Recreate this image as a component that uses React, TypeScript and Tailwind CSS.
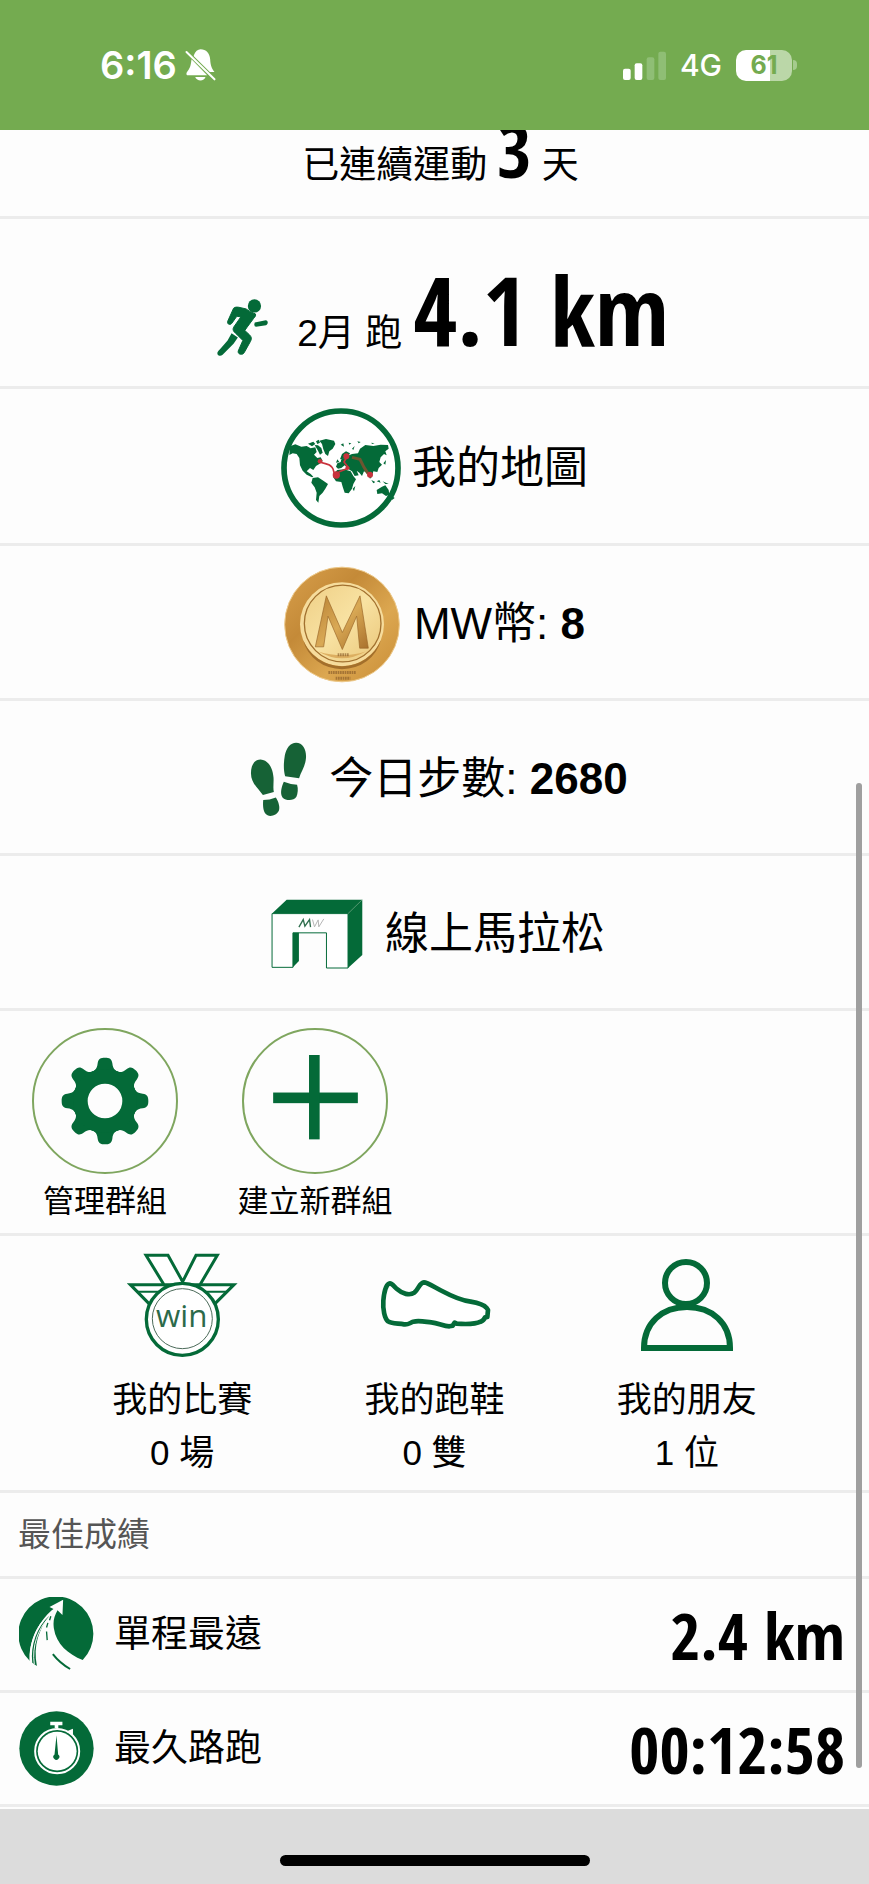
import React from "react";

const GREEN = "#046a38";

function BellOffIcon() {
    return (
        <svg viewBox="314 54 92 102" className="h-[34px] w-[31px]" aria-hidden="true">
            <path d="M340 76 C344 64 352 58 360 58 C377 58 388 70 389 88 C390 104 392 114 402 126 L388 126 L340 79 Z" fill="#fff" />
            <path d="M333 88 L380 136 L322 136 C316 136 317 129 321 124 C330 113 331 105 333 88 Z" fill="#fff" />
            <path d="M344 141 H375 C371 155 349 155 344 141 Z" fill="#fff" />
            <path d="M318 66 L402 148" stroke="#fff" strokeWidth="6" strokeLinecap="round" />
        </svg>
    );
}

function SignalIcon() {
    return (
        <svg viewBox="70 60 129 87" className="h-[29px] w-[43px]" aria-hidden="true">
            <rect x="70" y="113" width="23" height="34" rx="6" fill="#fff" />
            <rect x="105" y="97" width="23" height="50" rx="6" fill="#fff" />
            <rect x="141" y="79" width="23" height="68" rx="6" fill="#8fbe75" />
            <rect x="176" y="62" width="23" height="85" rx="6" fill="#8fbe75" />
        </svg>
    );
}

function StatusBar() {
    return (
        <header className="flex h-[130px] items-center justify-between bg-[#74ab50] pl-[100px] pr-[72px] font-['Inter','Liberation_Sans',sans-serif] text-white">
            <div className="flex items-center gap-2">
                <span className="text-[38px] font-semibold leading-[40px]">6:16</span>
                <BellOffIcon />
            </div>
            <div className="flex items-center">
                <SignalIcon />
                <span className="ml-[14px] text-[30px] font-medium leading-[40px]">4G</span>
                <span className="ml-[14px] flex h-[31px] w-[56px] items-center justify-center rounded-[10px] bg-linear-to-r from-white from-61% to-[#bbd7a8] to-61% text-[25px] font-bold leading-none text-[#74ab50]">61</span>
                <span className="ml-px h-[10px] w-[4px] rounded-r-full bg-[#a5cb8e]" />
            </div>
        </header>
    );
}

function RunnerIcon() {
    return (
        <svg viewBox="60 205 158 178" className="h-[59px] w-[53px]" aria-hidden="true" fill={GREEN}>
            <circle cx="175" cy="229" r="20" />
            <path d="M112 236 C116 232 122 232 128 233 L150 238 L160 245 L178 253 C180 258 177 262 173 266 L153 293 L146 303 L160 316 C167 323 167 329 163 336 L144 370 C140 378 124 376 126 365 L140 333 L121 314 C111 306 108 300 113 292 L134 262 L122 260 L107 281 C102 288 92 284 94 276 Z" stroke={GREEN} strokeWidth="3" strokeLinejoin="round" />
            <path d="M176 279 L209 272 C217 272 217 284 210 287 L180 292 Q172 290 176 279 Z" />
            <path d="M106 311 L125 324 L112 343 L79 376 C72 383 60 378 64 368 Q66 363 73 357 L94 333 Z" />
        </svg>
    );
}

function WorldMapIcon() {
    return (
        <svg viewBox="63 42 360 360" className="size-[120px]" aria-hidden="true">
            <circle cx="243" cy="222" r="171" fill="#fff" stroke={GREEN} strokeWidth="17" />
            <g fill={GREEN}>
                <path d="M90 157 L106 151 L124 158 L140 156 L152 163 L166 160 L170 174 L162 182 L172 192 L182 190 L188 200 L178 210 L168 216 L160 228 L150 222 L140 232 L152 240 L160 248 L156 250 L140 242 L128 230 L120 214 L118 192 L110 180 L98 178 L88 183 Z" />
                <path d="M144 149 L160 143 L166 150 L156 157 Z M168 142 L176 137 L180 146 L172 150 Z M164 153 L174 154 L184 162 L188 176 L180 182 L174 170 Z" />
                <path d="M178 140 L198 135 L222 140 L226 150 L218 164 L208 172 L204 186 L196 180 L190 166 L186 150 Z" />
                <path d="M158 252 L174 250 L190 260 L204 270 L196 284 L188 296 L178 306 L175 326 L168 318 L170 296 L164 280 L154 266 Z" />
                <path d="M222 238 L232 228 L252 226 L272 232 L280 246 L288 256 L280 270 L276 284 L266 298 L254 296 L248 278 L244 264 L228 262 L220 250 Z" />
                <path d="M228 218 L232 208 L242 204 L244 196 L254 192 L262 186 L276 180 L294 178 L300 164 L316 153 L340 156 L362 152 L384 153 L386 164 L376 172 L380 184 L372 180 L362 190 L358 204 L366 212 L356 222 L352 234 L340 232 L336 248 L330 254 L322 238 L312 232 L306 246 L298 236 L290 230 L296 244 L284 246 L276 232 L266 226 L254 214 L244 222 L234 224 Z" />
                <path d="M240 196 L246 180 L258 172 L270 178 L264 188 L252 194 Z M228 206 L232 196 L238 204 Z" />
                <path d="M350 288 L366 278 L376 274 L386 288 L388 302 L378 306 L366 298 L352 300 Z M396 306 L404 312 L396 318 Z" />
                <path d="M278 284 L286 276 L282 292 Z M334 258 L346 264 L340 268 Z M350 262 L358 258 L362 266 Z M368 262 L386 270 L376 270 Z M370 208 L378 198 L376 212 Z" />
                <path d="M242 152 L250 148 L252 158 Z M266 146 L274 148 L268 152 Z M276 164 L284 156 L280 168 Z M292 142 L302 144 L296 148 Z M334 146 L344 148 L336 150 Z M362 146 L372 148 Z" />
            </g>
            <path d="M276 190 L300 196 L312 220 L324 238" fill="none" stroke="#6d5530" strokeWidth="9" />
            <path d="M180 202 C190 212 206 206 216 220 C224 230 218 236 228 246 M262 186 L252 204 L266 222 L236 234" fill="none" stroke="#c8323c" strokeWidth="5" />
            <g fill="#c8323c">
                <circle cx="180" cy="202" r="7" />
                <circle cx="229" cy="243" r="11" />
                <circle cx="259" cy="187" r="9" />
                <circle cx="262" cy="222" r="6" />
                <circle cx="330" cy="242" r="9" />
            </g>
        </svg>
    );
}

function CoinIcon() {
    return (
        <svg viewBox="71 47 348 350" className="h-[117px] w-[116px]" aria-hidden="true">
            <defs>
                <linearGradient id="rim" x1="0" y1="0" x2="1" y2="1">
                    <stop offset="0" stopColor="#d9a04c" />
                    <stop offset=".35" stopColor="#c48a38" />
                    <stop offset=".65" stopColor="#dca750" />
                    <stop offset="1" stopColor="#c88c36" />
                </linearGradient>
                <linearGradient id="face" x1="0" y1="0" x2="1" y2="1">
                    <stop offset="0" stopColor="#efcf86" />
                    <stop offset=".5" stopColor="#f8e2a2" />
                    <stop offset="1" stopColor="#eac679" />
                </linearGradient>
                <linearGradient id="letter" x1="0" y1="0" x2="1" y2="1">
                    <stop offset="0" stopColor="#b98235" />
                    <stop offset=".5" stopColor="#d9a955" />
                    <stop offset="1" stopColor="#a8702c" />
                </linearGradient>
            </defs>
            <circle cx="245" cy="222" r="172" fill="url(#rim)" stroke="#edc98a" strokeWidth="3" />
            <circle cx="245" cy="221" r="126" fill="#f6dc9c" />
            <path d="M128 268 A126 126 0 0 0 362 268 A120 113 0 0 1 128 268 Z" fill="#a36f2b" />
            <circle cx="247" cy="219" r="115" fill="url(#face)" stroke="#a2712f" strokeWidth="4" />
            <path d="M165 289 L198 136 L246 246 L299 136 L324 293 H298 L289 197 L246 297 L203 197 L190 289 Z" fill="url(#letter)" stroke="#9a6628" strokeWidth="2" />
            <path d="M174 303 Q245 326 316 303 Q245 344 174 303 Z" fill="#dcae60" />
            <path d="M232 313 h34 M204 366 h84 M226 383 h44" stroke="#8a5d2a" strokeWidth="9" strokeDasharray="5 2" opacity=".65" />
        </svg>
    );
}

function StepsIcon() {
    return (
        <svg viewBox="60 64 170 226" className="h-[75px] w-[57px]" aria-hidden="true" fill="#166236">
            <path d="M62 158 C62 133 73 117 91 117 C114 118 128 143 130 171 C131 188 128 202 131 215 L98 224 C84 204 62 188 62 158 Z" />
            <path d="M99 239 Q118 239 137 231 C146 245 150 261 146 271 C141 283 124 290 112 285 C99 279 97 257 99 239 Z" />
            <path d="M165 167 C160 150 160 128 164 105 C168 82 181 66 198 66 C217 66 228 84 228 107 C228 134 214 151 207 173 Z" />
            <path d="M161 184 Q180 192 201 193 C205 205 203 220 199 229 C191 242 168 242 157 231 C149 220 154 199 161 184 Z" />
        </svg>
    );
}

function ArchIcon() {
    return (
        <svg viewBox="124 535 277 211" className="h-[70px] w-[92px]" aria-hidden="true">
            <path d="M127 579 L171 537 H399 V704 L356 743 V579 Z" fill={GREEN} />
            <path d="M127 579 H356 V743 H291 V637 H190 V741 H127 Z" fill="#fff" stroke={GREEN} strokeWidth="3" />
            <path d="M190 637 H208 V722 L190 741 Z" fill={GREEN} />
            <path d="M356 579 L399 537" stroke="#7fb08f" strokeWidth="2" />
            <path d="M208 620 L221 597 L226 617 L240 597 L243 620" fill="none" stroke="#2f6e4e" strokeWidth="4" />
            <path d="M249 597 L255 619 L266 598 L268 619 L283 595" fill="none" stroke="#b4b4b4" strokeWidth="3" />
        </svg>
    );
}

function GearIcon() {
    return (
        <svg viewBox="180 166 264 264" className="size-[88px]" aria-hidden="true">
            <g fill={GREEN}>
                {[0, 45, 90, 135, 180, 225, 270, 315].map((a) => (
                    <path key={a} transform={`rotate(${a} 312 298)`} d="M262 212 C280 211 288 204 290 185 C292 171 299 168 312 168 C325 168 332 171 334 185 C336 204 344 211 362 212 L336 236 H288 Z" />
                ))}
            </g>
            <circle cx="312" cy="298" r="74" fill="none" stroke={GREEN} strokeWidth="44" />
        </svg>
    );
}

function PlusIcon() {
    return (
        <svg viewBox="815 158 255 280" className="h-[93px] w-[85px]" aria-hidden="true" fill={GREEN}>
            <rect x="815" y="271" width="255" height="32" />
            <rect x="923" y="158" width="32" height="254" />
        </svg>
    );
}

function MedalIcon() {
    return (
        <svg viewBox="40 35 360 324" className="h-[108px] w-[120px]" aria-hidden="true">
            <g fill="#fff" stroke={GREEN} strokeWidth="9">
                <path d="M65 136 H376 L316 196 H124 Z" />
                <path d="M86 157 H354" strokeWidth="6" />
                <path d="M112 48 H178 L222 127 L262 48 H326 L274 136 H166 Z" />
                <circle cx="221" cy="240" r="108" strokeWidth="10" />
            </g>
            <path d="M222 130 L216 117" stroke={GREEN} strokeWidth="6" />
            <circle cx="221" cy="238" r="90" fill="none" stroke="#4c6b5a" strokeWidth="3" />
            <text x="219" y="263" textAnchor="middle" fontSize="94" fill="#2c6a4a" className="font-['Open_Sans','Liberation_Sans',sans-serif]">win</text>
        </svg>
    );
}

function ShoeIcon() {
    return (
        <svg viewBox="796 35 360 324" className="h-[108px] w-[120px]" aria-hidden="true">
            <path d="M844 132 C850 132 857 142 866 150 C880 163 903 170 917 160 C930 150 932 130 946 129 C956 129 980 145 1000 155 C1030 171 1056 183 1086 187 C1110 191 1128 199 1134 206 L1138 212 L1136 233 L1129 234 C1126 242 1122 245 1116 247 C1098 256 1074 255 1044 253 L1038 250 L1032 259 L1022 261 C1004 261 990 251 968 249 C948 247 930 243 914 247 C903 251 898 257 886 255 C868 252 846 253 838 246 C828 238 822 210 824 184 C826 160 832 133 844 132 Z" fill="#fff" stroke={GREEN} strokeWidth="14" strokeLinejoin="round" />
        </svg>
    );
}

function PersonIcon() {
    return (
        <svg viewBox="0 0 120 108" className="h-[108px] w-[120px]" aria-hidden="true">
            <g fill="none" stroke={GREEN} strokeWidth="6">
                <circle cx="59" cy="32" r="21" />
                <path d="M17 97 C17 72 35 56 60 56 C85 56 103 72 103 97 Z" />
            </g>
        </svg>
    );
}

function RoadIcon() {
    return (
        <svg viewBox="58 314 226 226" className="size-[75px]" aria-hidden="true">
            <path d="M90 506 A113 113 0 1 1 250 504 C206 486 170 456 163 408 C160 386 164 372 174 354 L189 368 L191 322 L150 344 L162 350 C128 374 86 440 90 506 Z" fill={GREEN} />
            <path d="M98 512 C92 460 112 404 150 370 C118 412 100 460 112 522" fill={GREEN} />
            <path d="M92 504 C90 462 104 414 132 384" fill="none" stroke="#fff" strokeWidth="3" />
            <path d="M104 516 C96 462 116 410 146 378" fill="none" stroke="#fff" strokeWidth="3" />
            <path d="M154 372 L150 384 M145 392 L141 406 M141 418 L143 444" stroke={GREEN} strokeWidth="4" />
            <path d="M160 486 Q180 512 212 531" fill="none" stroke={GREEN} strokeWidth="6" />
        </svg>
    );
}

function StopwatchIcon() {
    return (
        <svg viewBox="56 652 226 228" className="size-[75px]" aria-hidden="true">
            <circle cx="169" cy="766" r="113" fill={GREEN} />
            <path d="M150 690 H187 M169 690 V704" stroke="#fff" strokeWidth="11" />
            <path d="M203 715 L217 709 V722 Z" fill="#fff" stroke="#fff" strokeWidth="4" />
            <circle cx="171" cy="774" r="67" fill="none" stroke="#fff" strokeWidth="6" />
            <circle cx="171" cy="774" r="59" fill="#fff" />
            <path d="M169 726 L174 784 A9 9 0 1 1 163 784 Z" fill={GREEN} />
        </svg>
    );
}

type RowProps = { icon: React.ReactNode; children: React.ReactNode; className: string };

function MenuRow({ icon, children, className }: RowProps) {
    return (
        <a href="#" className={`flex items-center justify-center border-b-[3px] border-[#ececec] pt-[4px] text-[44px] leading-[60px] ${className}`}>
            {icon}
            <span>{children}</span>
        </a>
    );
}

function GroupButton({ icon, label }: { icon: React.ReactNode; label: string }) {
    return (
        <button type="button" className="flex w-[210px] flex-col items-center">
            <span className="flex size-[146px] items-center justify-center rounded-full border-2 border-[#7fa65f]">{icon}</span>
            <span className="mt-[6px] text-[31px] leading-[44px]">{label}</span>
        </button>
    );
}

function Stat({ icon, label, value }: { icon: React.ReactNode; label: string; value: string }) {
    return (
        <a href="#" className="flex flex-col items-center text-[35px] leading-[53px]">
            {icon}
            <span className="mt-[14px]">{label}</span>
            <span>{value}</span>
        </a>
    );
}

function RecordRow({ icon, label, value }: { icon: React.ReactNode; label: string; value: string }) {
    return (
        <a href="#" className="flex h-[114px] items-center border-b-[3px] border-[#ececec] pl-[19px] pr-[24px]">
            {icon}
            <span className="ml-[20px] text-[37px] leading-[50px]">{label}</span>
            <span className="ml-auto font-['Open_Sans_Condensed','Roboto_Condensed',sans-serif] text-[65px] font-bold leading-[72px]">{value}</span>
        </a>
    );
}

export default function App() {
    return (
        <div className="relative flex min-h-screen flex-col bg-[#fdfdfd] font-['Liberation_Sans','Noto_Sans_CJK_TC',sans-serif] text-black">
            <StatusBar />
            <main className="flex-1">
                <p className="flex h-[89px] items-baseline justify-center gap-[10px] overflow-hidden border-b-[3px] border-[#ececec] pl-[12px] text-[37px] leading-[40px]">
                    <span>已連續運動</span>
                    <span className="font-['Open_Sans_Condensed','Roboto_Condensed',sans-serif] text-[74px] font-bold">3</span>
                    <span>天</span>
                </p>
                <a href="#" className="flex h-[170px] items-end justify-center border-b-[3px] border-[#ececec] pl-[16px]">
                    <span className="pb-[29px]">
                        <RunnerIcon />
                    </span>
                    <span className="ml-[28px] flex items-baseline gap-[11px] pb-[22px] text-[37px] leading-[60px]">
                        <span>2月 跑</span>
                        <span className="font-['Open_Sans_Condensed','Roboto_Condensed',sans-serif] text-[95px] font-bold">4.1 km</span>
                    </span>
                </a>
                <MenuRow icon={<WorldMapIcon />} className="h-[157px] gap-[11px]">我的地圖</MenuRow>
                <MenuRow icon={<CoinIcon />} className="h-[155px] gap-[14px]">
                    MW幣: <b>8</b>
                </MenuRow>
                <MenuRow icon={<StepsIcon />} className="h-[155px] gap-[22px] pl-[9px]">
                    今日步數: <b>2680</b>
                </MenuRow>
                <MenuRow icon={<ArchIcon />} className="h-[155px] gap-[22px] pl-[7px]">線上馬拉松</MenuRow>
                <section className="flex h-[225px] border-b-[3px] border-[#ececec] pt-[17px]">
                    <GroupButton icon={<GearIcon />} label="管理群組" />
                    <GroupButton icon={<PlusIcon />} label="建立新群組" />
                </section>
                <section className="grid h-[257px] grid-cols-3 border-b-[3px] border-[#ececec] px-[56px] pt-[15px]">
                    <Stat icon={<MedalIcon />} label="我的比賽" value="0 場" />
                    <Stat icon={<ShoeIcon />} label="我的跑鞋" value="0 雙" />
                    <Stat icon={<PersonIcon />} label="我的朋友" value="1 位" />
                </section>
                <h2 className="flex h-[86px] items-center border-b-[3px] border-[#ececec] px-[18px] text-[33px] leading-[44px] text-[#555]">最佳成績</h2>
                <RecordRow icon={<RoadIcon />} label="單程最遠" value="2.4 km" />
                <RecordRow icon={<StopwatchIcon />} label="最久路跑" value="00:12:58" />
            </main>
            <footer className="flex h-[75px] items-end justify-center bg-[#dcdcdc] pb-[18px]">
                <span className="h-[11px] w-[310px] rounded-full bg-black" />
            </footer>
            <div className="absolute bottom-[116px] right-[7px] h-[985px] w-[6px] rounded-full bg-[#9f9f9f]" />
        </div>
    );
}
